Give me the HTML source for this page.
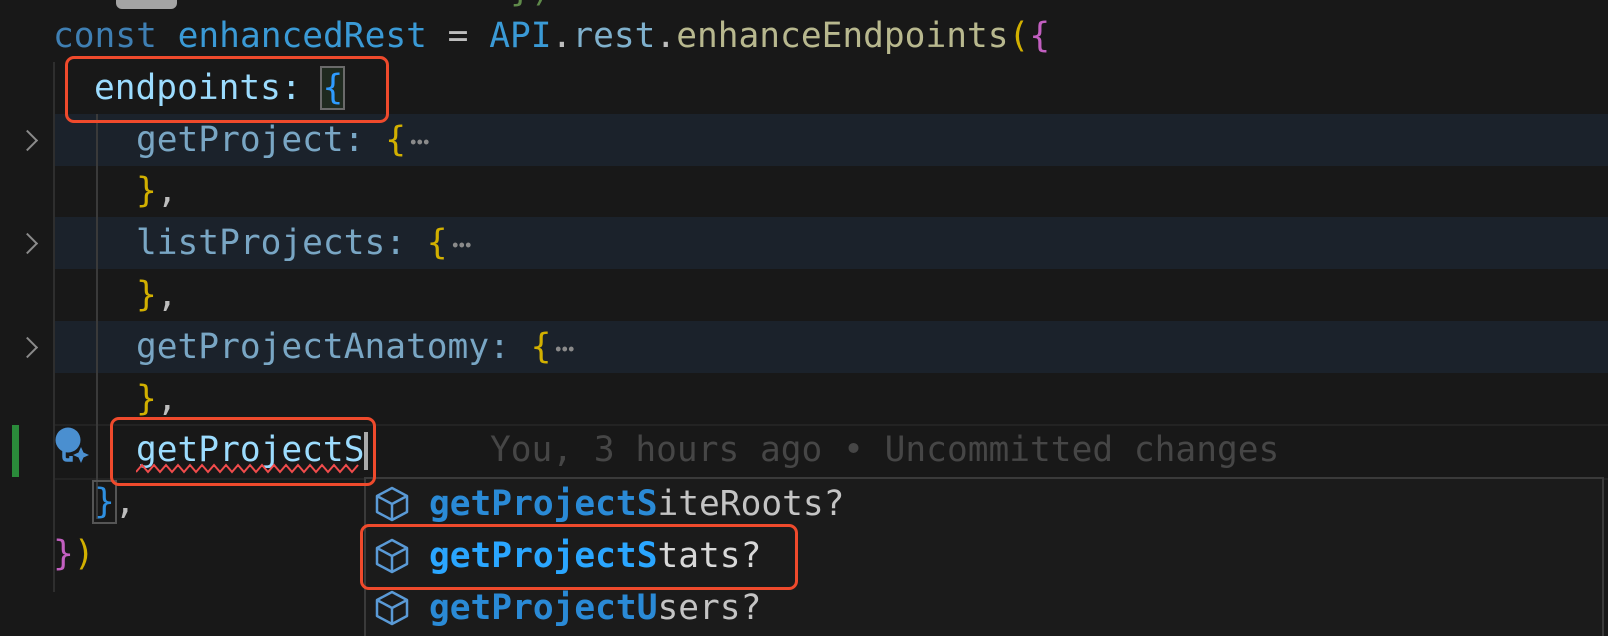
<!DOCTYPE html>
<html><head><meta charset="utf-8"><style>
html,body{margin:0;padding:0;background:#181818;width:1608px;height:636px;overflow:hidden;position:relative}
.t{position:absolute;font-family:"DejaVu Sans Mono","Liberation Mono",monospace;font-size:34.5px;white-space:pre;line-height:52px;height:52px}
.fold{position:absolute;left:53px;right:0;height:52px;background:#1b222b}
.abs{position:absolute}
.box{position:absolute;border:3px solid #ef4a2c;border-radius:9px}
.chev{position:absolute;left:20px;width:13px;height:13px;border-right:2.5px solid #8a8a8a;border-top:2.5px solid #8a8a8a;transform:rotate(45deg)}
.el{display:inline-block;width:20px;height:6px;vertical-align:middle;margin-left:4px;background:radial-gradient(circle,#8a8a8a 2.2px,transparent 2.6px) 0 0/6.5px 6px repeat-x}
</style></head><body>
<div class="abs" style="left:116px;top:-8px;width:61px;height:17px;background:#a4a4a4;border-radius:6px"></div>
<div class="t" style="left:510px;top:-36px;color:#5f8a4a">})</div>

<div class="fold" style="top:114px"></div>
<div class="fold" style="top:217px"></div>
<div class="fold" style="top:321px"></div>
<div class="abs" style="left:53px;right:0;top:424px;height:52px;border-top:2px solid #232323;border-bottom:2px solid #232323"></div>

<div class="abs" style="left:53px;top:62px;width:2px;height:530px;background:#2e2e2e"></div>
<div class="abs" style="left:96px;top:114px;width:2px;height:405px;background:#3a3a3a"></div>

<div class="chev" style="top:133px"></div>
<div class="chev" style="top:236px"></div>
<div class="chev" style="top:340px"></div>
<div class="abs" style="left:12px;top:425px;width:7px;height:52px;background:#2a8a3a"></div>

<div class="t" style="left:53px;top:10px"><span style="color:#3f7fb3">const</span> <span style="color:#3a9ad6">enhancedRest</span> <span style="color:#bdbdbd">=</span> <span style="color:#3a9ad6">API</span><span style="color:#bdbdbd">.</span><span style="color:#7fb0cc">rest</span><span style="color:#bdbdbd">.</span><span style="color:#b8b88e">enhanceEndpoints</span><span style="color:#d2b000">(</span><span style="color:#c25fc0">{</span></div>
<div class="t" style="left:94px;top:62px;color:#9cdcfe">endpoints: <span style="color:#2e9cff;outline:2px solid #6a6a6a;background:#1f2a1f">{</span></div>
<div class="t" style="left:136px;top:114px;color:#79a6c4">getProject: <span style="color:#d2b000">{</span><span class="el"></span></div>
<div class="t" style="left:136px;top:165px;color:#bdbdbd"><span style="color:#d2b000">}</span>,</div>
<div class="t" style="left:136px;top:217px;color:#79a6c4">listProjects: <span style="color:#d2b000">{</span><span class="el"></span></div>
<div class="t" style="left:136px;top:269px;color:#bdbdbd"><span style="color:#d2b000">}</span>,</div>
<div class="t" style="left:136px;top:321px;color:#79a6c4">getProjectAnatomy: <span style="color:#d2b000">{</span><span class="el"></span></div>
<div class="t" style="left:136px;top:373px;color:#bdbdbd"><span style="color:#d2b000">}</span>,</div>
<div class="t" style="left:136px;top:424px;color:#9cdcfe">getProjectS</div>
<div class="abs" style="left:364px;top:432px;width:4px;height:38px;background:#aaa"></div>
<svg class="abs" style="left:136px;top:462px" width="228" height="14"><path d="M0 10 l6 -7 l6 7 l6 -7 l6 7 l6 -7 l6 7 l6 -7 l6 7 l6 -7 l6 7 l6 -7 l6 7 l6 -7 l6 7 l6 -7 l6 7 l6 -7 l6 7 l6 -7 l6 7 l6 -7 l6 7 l6 -7 l6 7 l6 -7 l6 7 l6 -7 l6 7 l6 -7 l6 7 l6 -7 l6 7 l6 -7 l6 7 l6 -7 l6 7 l6 -7" fill="none" stroke="#f14c4c" stroke-width="2"/></svg>
<div class="t" style="left:490px;top:424px;color:#464646">You, 3 hours ago • Uncommitted changes</div>
<svg class="abs" style="left:55px;top:427px" width="36" height="38"><circle cx="13" cy="13" r="12.5" fill="#4a8fd0"/><path d="M9 22 v8 q0 3 3 3 h4 v-4" fill="none" stroke="#4a8fd0" stroke-width="3.5"/><path d="M26 20 l2.5 5.5 l5.5 2.5 l-5.5 2.5 l-2.5 5.5 l-2.5 -5.5 l-5.5 -2.5 l5.5 -2.5z" fill="#4a8fd0"/></svg>

<div class="t" style="left:94px;top:476px;color:#bdbdbd"><span style="color:#2e8fe0;outline:2px solid #555">}</span>,</div>
<div class="t" style="left:53px;top:528px"><span style="color:#c25fc0">}</span><span style="color:#d2b000">)</span></div>

<div class="abs" style="left:364px;top:477px;width:1236px;height:170px;background:#1b1b1b;border:2px solid #3a3a3a"></div>
<svg width="0" height="0" style="position:absolute"><defs><g id="cube"><path d="M17 2 L32 10 L32 26 L17 34 L2 26 L2 10 Z M2 10 L17 18 L32 10 M17 18 V34" fill="none" stroke="#5a9ad6" stroke-width="2.5" stroke-linejoin="round"/></g></defs></svg>
<svg class="abs" style="left:375px;top:486px" width="36" height="36"><use href="#cube"/></svg>
<svg class="abs" style="left:375px;top:538px" width="36" height="36"><use href="#cube"/></svg>
<svg class="abs" style="left:375px;top:590px" width="36" height="36"><use href="#cube"/></svg>
<div class="t" style="left:429px;top:478px;color:#c4c4c4"><b style="color:#2a8ad6">getProjectS</b>iteRoots?</div>
<div class="t" style="left:429px;top:530px;color:#d8d8d8"><b style="color:#2aa6ff">getProjectS</b>tats?</div>
<div class="t" style="left:429px;top:582px;color:#c4c4c4"><b style="color:#2a8ad6">getProjectU</b>sers?</div>

<div class="box" style="left:65px;top:56px;width:318px;height:61px"></div>
<div class="box" style="left:110px;top:417px;width:260px;height:63px"></div>
<div class="box" style="left:360px;top:524px;width:432px;height:60px"></div>
</body></html>
